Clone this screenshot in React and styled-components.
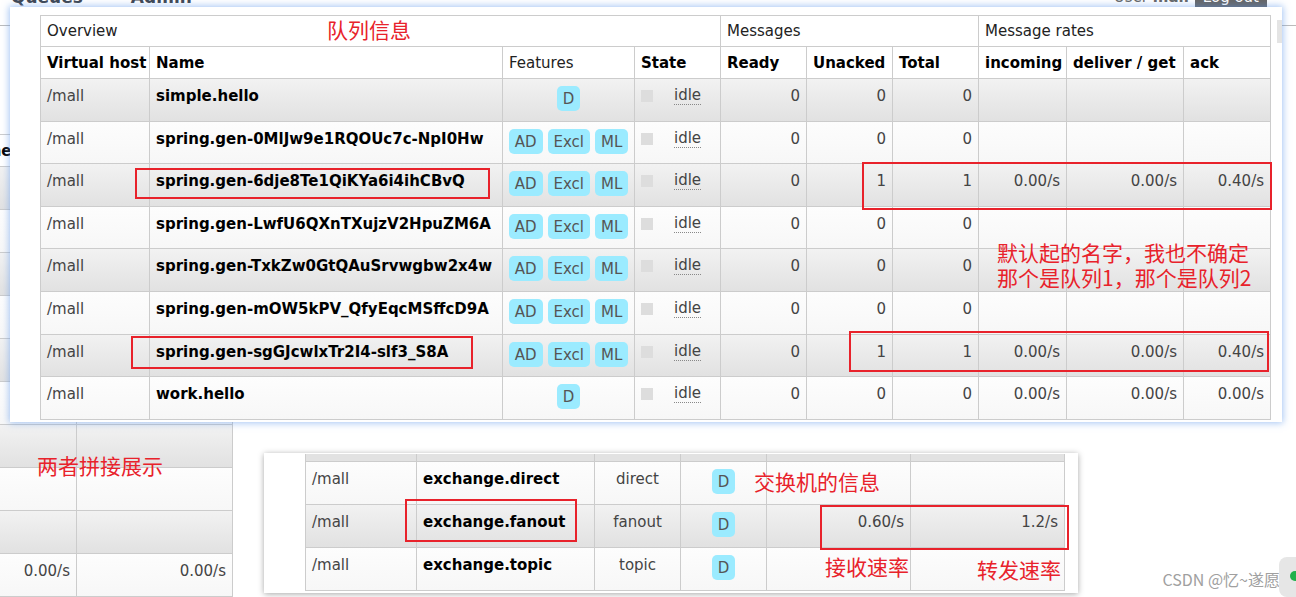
import React from 'react';
import styled, { createGlobalStyle } from 'styled-components';

const GlobalStyle = createGlobalStyle`
  html, body {
    margin: 0;
    padding: 0;
    background: #ffffff;
  }
  body {
    font-family: 'DejaVu Sans', Verdana, sans-serif;
    font-size: 15px;
    color: #444444;
  }
`;

const rates3 = ['0.00/s', '0.00/s', '0.40/s'];
const queues = [
  { name: 'simple.hello', features: ['D'], counts: [0, 0, 0] },
  { name: 'spring.gen-0MlJw9e1RQOUc7c-NpI0Hw', features: ['AD', 'Excl', 'ML'], counts: [0, 0, 0] },
  { name: 'spring.gen-6dje8Te1QiKYa6i4ihCBvQ', features: ['AD', 'Excl', 'ML'], counts: [0, 1, 1], rates: rates3 },
  { name: 'spring.gen-LwfU6QXnTXujzV2HpuZM6A', features: ['AD', 'Excl', 'ML'], counts: [0, 0, 0] },
  { name: 'spring.gen-TxkZw0GtQAuSrvwgbw2x4w', features: ['AD', 'Excl', 'ML'], counts: [0, 0, 0] },
  { name: 'spring.gen-mOW5kPV_QfyEqcMSffcD9A', features: ['AD', 'Excl', 'ML'], counts: [0, 0, 0] },
  { name: 'spring.gen-sgGJcwlxTr2I4-slf3_S8A', features: ['AD', 'Excl', 'ML'], counts: [0, 1, 1], rates: rates3 },
  { name: 'work.hello', features: ['D'], counts: [0, 0, 0], rates: ['0.00/s', '0.00/s', '0.00/s'] },
];

const exchanges = [
  { name: 'exchange.direct', type: 'direct' },
  { name: 'exchange.fanout', type: 'fanout', rates: ['0.60/s', '1.2/s'] },
  { name: 'exchange.topic', type: 'topic' },
];

const App = () => {
  return (<>
    <GlobalStyle/>
    <Desktop>
      <BackPage>
        <TopNav>
          <NavLinks>
            <NavLink>Queues</NavLink>
            <NavLink>Admin</NavLink>
          </NavLinks>
          <UserBox>
            <span>User <b>mall</b></span>
            <LogOut>Log out</LogOut>
          </UserBox>
        </TopNav>
        <BackTable>
          <colgroup>
            <col style={{ width: 120 }}/>
            <col style={{ width: 156 }}/>
          </colgroup>
          <thead>
            <HeadRow>
              <Th $bold>Name</Th>
              <Th $bold></Th>
            </HeadRow>
          </thead>
          <tbody>
            {Array.from({ length: 10 }).map((_, i) => (
              <Row key={i} $alt={i % 2 === 0} $h={43}>
                <Num>{i === 9 ? '0.00/s' : ''}</Num>
                <Num>{i === 9 ? '0.00/s' : ''}</Num>
              </Row>
            ))}
          </tbody>
        </BackTable>
      </BackPage>

      <QueueWindow>
        <QueueTable>
          <colgroup>
            {[109, 353, 132, 86, 86, 86, 86, 88, 117, 87].map((w, i) => (
              <col key={i} style={{ width: w }}/>
            ))}
          </colgroup>
          <thead>
            <GroupRow>
              <Th colSpan={4}>Overview</Th>
              <Th colSpan={3}>Messages</Th>
              <Th colSpan={3}>Message rates</Th>
            </GroupRow>
            <HeadRow>
              <Th $bold>Virtual host</Th>
              <Th $bold>Name</Th>
              <Th>Features</Th>
              <Th $bold>State</Th>
              <Th $bold>Ready</Th>
              <Th $bold>Unacked</Th>
              <Th $bold>Total</Th>
              <Th $bold>incoming</Th>
              <Th $bold>deliver / get</Th>
              <Th $bold>ack</Th>
            </HeadRow>
          </thead>
          <tbody>
            {queues.map((q, i) => (
              <Row key={q.name} $alt={i % 2 === 0}>
                <Td>/mall</Td>
                <NameTd>{q.name}</NameTd>
                <FeatureTd>
                  <Badges>
                    {q.features.map((f) => <Badge key={f}>{f}</Badge>)}
                  </Badges>
                </FeatureTd>
                <Td>
                  <StateBox>
                    <StateSquare/>
                    <Idle>idle</Idle>
                  </StateBox>
                </Td>
                {q.counts.map((c, k) => <Num key={k}>{c}</Num>)}
                {[0, 1, 2].map((k) => <Num key={'r' + k}>{q.rates ? q.rates[k] : ''}</Num>)}
              </Row>
            ))}
          </tbody>
        </QueueTable>
        <ColToggle>+/-</ColToggle>
      </QueueWindow>

      <ExchangeSnippet>
        <ExchangeTable>
          <colgroup>
            {[111, 178, 86, 86, 144, 154].map((w, i) => (
              <col key={i} style={{ width: w }}/>
            ))}
          </colgroup>
          <tbody>
            <StripRow>
              {[0, 1, 2, 3, 4, 5].map((k) => <StripCell key={k}/>)}
            </StripRow>
            {exchanges.map((e, i) => (
              <Row key={e.name} $alt={i === 1} $h={43}>
                <Td>/mall</Td>
                <NameTd>{e.name}</NameTd>
                <TypeTd>{e.type}</TypeTd>
                <FeatureTd>
                  <Badges><Badge>D</Badge></Badges>
                </FeatureTd>
                <Num>{e.rates ? e.rates[0] : ''}</Num>
                <Num>{e.rates ? e.rates[1] : ''}</Num>
              </Row>
            ))}
          </tbody>
        </ExchangeTable>
      </ExchangeSnippet>

      <Mark $x={135} $y={168} $w={355} $h={31}/>
      <Mark $x={862} $y={162} $w={410} $h={48}/>
      <Mark $x={131} $y={336} $w={342} $h={33}/>
      <Mark $x={849} $y={331} $w={420} $h={41}/>
      <Mark $x={405} $y={499} $w={172} $h={43}/>
      <Mark $x={820} $y={505} $w={249} $h={45}/>

      <Note $x={327} $y={17}>队列信息</Note>
      <Note $x={997} $y={240}>默认起的名字，我也不确定<br/>那个是队列1，那个是队列2</Note>
      <Note $x={37} $y={453}>两者拼接展示</Note>
      <Note $x={754} $y={469}>交换机的信息</Note>
      <Note $x={825} $y={554}>接收速率</Note>
      <Note $x={977} $y={557}>转发速率</Note>

      <Watermark>CSDN @忆~遂愿</Watermark>
      <SideTab><Dot/></SideTab>
    </Desktop>
  </>);
};

export default App;

const Desktop = styled.div`
  background: #ffffff;
  height: 597px;
  overflow: hidden;
  position: relative;
  width: 1296px;
`;

const BackPage = styled.div`
  display: flex;
  flex-direction: column;
`;

const TopNav = styled.div`
  align-items: flex-start;
  border-bottom: 1px solid #bbbbbb;
  display: flex;
  height: 39px;
  justify-content: space-between;
  margin-top: -14px;
  padding: 0 29px 0 11px;
`;

const NavLinks = styled.div`
  display: flex;
  gap: 48px;
`;

const NavLink = styled.span`
  color: #3f4650;
  font-size: 17px;
  font-weight: bold;
  line-height: 22px;
`;

const UserBox = styled.div`
  align-items: flex-start;
  color: #666666;
  display: flex;
  font-size: 15px;
  gap: 6px;
  line-height: 22px;
`;

const LogOut = styled.span`
  background: #666666;
  color: #ffffff;
  padding: 0 8px;
`;

const BackTable = styled.table`
  border-collapse: collapse;
  margin-left: -44px;
  margin-top: 108px;
  table-layout: fixed;
  width: 276px;
`;

const QueueWindow = styled.div`
  align-items: flex-start;
  background: #ffffff;
  box-shadow: 0 0 7px 1px rgba(90, 150, 235, 0.55);
  box-sizing: border-box;
  display: flex;
  height: 415px;
  left: 10px;
  overflow: hidden;
  padding: 8px 0 0 30px;
  position: absolute;
  top: 7px;
  width: 1272px;
`;

const QueueTable = styled.table`
  border-collapse: collapse;
  flex: none;
  table-layout: fixed;
  width: 1230px;
`;

const ColToggle = styled.div`
  background: #e4e4e4;
  color: #333333;
  flex: none;
  font-size: 12px;
  height: 23px;
  line-height: 23px;
  margin: 5px 0 0 6px;
  padding-left: 5px;
  width: 24px;
`;

const ExchangeSnippet = styled.div`
  background: #ffffff;
  box-shadow: 0 1px 6px rgba(0, 0, 0, 0.35);
  box-sizing: border-box;
  height: 140px;
  left: 264px;
  padding: 1px 0 0 41px;
  position: absolute;
  top: 453px;
  width: 814px;
`;

const ExchangeTable = styled.table`
  border-collapse: collapse;
  table-layout: fixed;
  width: 759px;
`;

const GroupRow = styled.tr`
  background: #ffffff;
  height: 31px;
`;

const HeadRow = styled.tr`
  background: #ffffff;
  height: 32px;
`;

const StripRow = styled.tr`
  height: 7px;
`;

const StripCell = styled.td`
  background: #e2e2e2;
  border: 1px solid #cccccc;
  border-top: none;
  padding: 0;
`;

const Row = styled.tr`
  background: ${({ $alt }) => $alt
    ? 'linear-gradient(to bottom, #f2f2f2, #e1e1e1)'
    : 'linear-gradient(to bottom, #fdfdfd, #f7f7f7)'};
  height: ${({ $h }) => $h || 42.6}px;
`;

const Th = styled.th`
  border: 1px solid #cccccc;
  color: ${({ $bold }) => $bold ? '#000000' : '#222222'};
  font-weight: ${({ $bold }) => $bold ? 'bold' : 'normal'};
  padding: 0 6px;
  text-align: left;
  vertical-align: middle;
  white-space: nowrap;
`;

const Td = styled.td`
  border: 1px solid #cccccc;
  color: #444444;
  line-height: 18px;
  overflow: hidden;
  padding: 8px 6px 0;
  vertical-align: top;
  white-space: nowrap;
`;

const NameTd = styled(Td)`
  color: #000000;
  font-weight: bold;
`;

const TypeTd = styled(Td)`
  text-align: center;
`;

const Num = styled(Td)`
  text-align: right;
`;

const FeatureTd = styled(Td)`
  padding-top: 7px;
`;

const Badges = styled.div`
  display: flex;
  gap: 5px;
  justify-content: center;
`;

const Badge = styled.span`
  background: #9bebff;
  border-radius: 5px;
  color: #555555;
  height: 25px;
  line-height: 26px;
  padding: 0 6px;
`;

const StateBox = styled.div`
  align-items: center;
  display: flex;
  gap: 21px;
`;

const StateSquare = styled.span`
  background: #dddddd;
  display: block;
  height: 12px;
  width: 12px;
`;

const Idle = styled.span`
  border-bottom: 1px dotted #888888;
  color: #444444;
  line-height: 17px;
`;

const Mark = styled.div`
  border: 2px solid #e8222b;
  box-sizing: border-box;
  height: ${({ $h }) => $h}px;
  left: ${({ $x }) => $x}px;
  position: absolute;
  top: ${({ $y }) => $y}px;
  width: ${({ $w }) => $w}px;
`;

const Note = styled.div`
  color: #e8222b;
  font-family: 'Noto Sans CJK SC', 'DejaVu Sans', sans-serif;
  font-size: 21px;
  left: ${({ $x }) => $x}px;
  line-height: 25px;
  position: absolute;
  top: ${({ $y }) => $y}px;
  white-space: nowrap;
`;

const Watermark = styled.div`
  color: #a0a0a0;
  font-family: 'Noto Sans CJK SC', 'DejaVu Sans', sans-serif;
  font-size: 16px;
  position: absolute;
  right: 16px;
  top: 567px;
`;

const SideTab = styled.div`
  background: #e6e6e6;
  border-radius: 8px 0 0 8px;
  height: 40px;
  position: absolute;
  right: 0;
  top: 557px;
  width: 17px;
`;

const Dot = styled.span`
  background: #22b14c;
  border-radius: 50%;
  display: block;
  height: 10px;
  margin: 14px 0 0 11px;
  width: 10px;
`;
